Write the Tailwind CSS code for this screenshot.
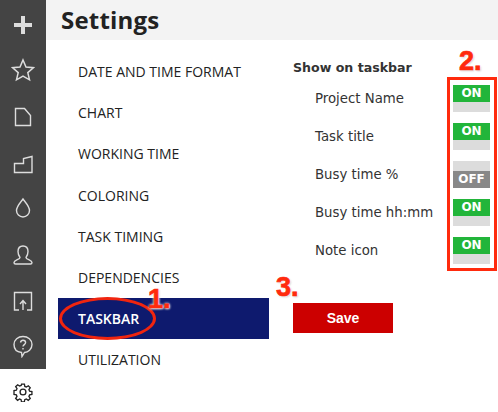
<!DOCTYPE html>
<html>
<head>
<meta charset="utf-8">
<script src="https://cdn.jsdelivr.net/npm/@tailwindcss/browser@4"></script>
</head>
<body class="bg-white">
<div class="relative flex w-[498px] h-[412px] overflow-hidden font-['Open_Sans',sans-serif] text-[#222]">
  <aside class="w-[46px] shrink-0 flex flex-col items-center">
    <div class="w-full h-[369px] bg-[#444] flex flex-col items-center text-[#ddd] pt-[13px]">
      <svg width="24" height="24" viewBox="0 0 24 24" class="shrink-0"><path d="M10 3h4v7h7v4h-7v7h-4v-7H3v-4h7z" fill="#ddd"/></svg>
      <svg width="24" height="24" viewBox="0 0 24 24" class="shrink-0 mt-[21px]" fill="none" stroke="#ddd" stroke-width="1.500"><path d="M12 2l3 7 7.400.7-5.600 4.900 1.700 7.200L12 18l-6.500 3.800 1.700-7.200L1.600 9.700 9 9z"/></svg>
      <svg width="24" height="24" viewBox="0 0 24 24" class="shrink-0 mt-[23px]" fill="none" stroke="#ddd" stroke-width="1.400"><path d="M4.500 3.500h9l6 7v10h-15z"/></svg>
      <svg width="24" height="24" viewBox="0 0 24 24" class="shrink-0 mt-[23px]" fill="none" stroke="#ddd" stroke-width="1.400"><path d="M3.500 20.500v-9h9v-5l8.500-2v16z"/></svg>
      <svg width="24" height="24" viewBox="0 0 24 24" class="shrink-0 mt-[20px]" fill="none" stroke="#ddd" stroke-width="1.400"><path d="M12 3c3 4 6.500 7.500 6.500 11.500a6.500 6.500 0 0 1-13 0C5.500 10.500 9 7 12 3z"/></svg>
      <svg width="24" height="24" viewBox="0 0 24 24" class="shrink-0 mt-[23px]" fill="none" stroke="#ddd" stroke-width="1.400"><path d="M9 14.500C7.500 12.500 7 10.500 7 8.500 7 5 9 3 12 3s5 2 5 5.500c0 2-.5 4-2 6 0 2 6 2.500 6 5 0 1-.500 1.500-1.500 1.500H4.500C3.500 21 3 20.500 3 19.500c0-2.500 6-3 6-5z"/></svg>
      <svg width="24" height="24" viewBox="0 0 24 24" class="shrink-0 mt-[22px]" fill="none" stroke="#ddd" stroke-width="1.400"><path d="M8 21H3.500V3.500h17V21H16M12 21v-9M9 15l3-3.500 3 3.500"/></svg>
      <svg width="24" height="24" viewBox="0 0 24 24" class="shrink-0 mt-[21px]" fill="none" stroke="#ddd" stroke-width="1.400"><path d="M12 2.500c5 0 9 3.300 9 8s-4 8-7.500 8L11 22.500l-.5-4C6 18 3 15 3 10.500s4-8 9-8z"/><path d="M9.500 8.500c.3-1.500 1.300-2.200 2.500-2.200 1.500 0 2.600 1 2.600 2.300 0 2-2.600 2-2.600 4M12 14v1.500"/></svg>
    </div>
    <svg width="20" height="20" viewBox="0 0 24 24" class="mt-[13px]" fill="none" stroke="#222" stroke-width="1.600"><circle cx="12" cy="12" r="3.500"/><path d="M10.300 2.500h3.400l.5 2.800 1.800.8 2.400-1.600 2.300 2.400-1.600 2.300.8 1.900 2.800.5v3.400l-2.800.5-.8 1.800 1.600 2.400-2.400 2.300-2.300-1.600-1.900.8-.5 2.800h-3.400l-.5-2.800-1.800-.8-2.400 1.600-2.300-2.400 1.600-2.300-.8-1.900-2.800-.5V10.300l2.800-.5.800-1.800-1.600-2.400 2.400-2.300 2.300 1.600 1.900-.8z"/></svg>
  </aside>
  <main class="flex-1 min-w-0">
    <header class="h-[40px] bg-[#f3f3f3] pl-[15px] flex items-center">
      <h1 class="text-[24px] leading-[36px] font-bold text-[#222] tracking-[0.2px]">Settings</h1>
    </header>
    <div class="flex pl-[12px]">
      <nav class="w-[211px] shrink-0 pt-[11px] flex flex-col text-[14px]">
        <div class="h-[41.200px] pl-[20px] flex items-center">DATE AND TIME FORMAT</div>
        <div class="h-[41.200px] pl-[20px] flex items-center">CHART</div>
        <div class="h-[41.200px] pl-[20px] flex items-center">WORKING TIME</div>
        <div class="h-[41.200px] pl-[20px] flex items-center">COLORING</div>
        <div class="h-[41.200px] pl-[20px] flex items-center">TASK TIMING</div>
        <div class="h-[41.200px] pl-[20px] flex items-center">DEPENDENCIES</div>
        <div class="h-[41.200px] pl-[20px] flex items-center bg-[#0e1a6e] text-white font-semibold">TASKBAR</div>
        <div class="h-[41.200px] pl-[20px] flex items-center">UTILIZATION</div>
      </nav>
      <section class="pl-[24px] flex-1 pt-[18px] font-['DejaVu_Sans',sans-serif] text-[13.300px] text-[#333]">
        <div class="font-bold h-[19px] leading-[19px] text-[12.600px]">Show on taskbar</div>
        <div class="flex flex-col gap-[11px] mt-[8px]">
          <div class="flex h-[27px]"><span class="ml-[22px] w-[138px] leading-[28px]">Project Name</span>
            <div class="w-[37px] flex flex-col bg-[#dcdcdc]"><div class="h-[17px] bg-[#22b53a] text-white font-bold text-[12px] leading-[17px] text-center">ON</div></div></div>
          <div class="flex h-[27px]"><span class="ml-[22px] w-[138px] leading-[28px]">Task title</span>
            <div class="w-[37px] flex flex-col bg-[#dcdcdc]"><div class="h-[17px] bg-[#22b53a] text-white font-bold text-[12px] leading-[17px] text-center">ON</div></div></div>
          <div class="flex h-[27px]"><span class="ml-[22px] w-[138px] leading-[28px]">Busy time %</span>
            <div class="w-[37px] flex flex-col justify-end bg-[#dcdcdc]"><div class="h-[17px] bg-[#888] text-white font-bold text-[12px] leading-[17px] text-center">OFF</div></div></div>
          <div class="flex h-[27px]"><span class="ml-[22px] w-[138px] leading-[28px] whitespace-nowrap">Busy time hh:mm</span>
            <div class="w-[37px] flex flex-col bg-[#dcdcdc]"><div class="h-[17px] bg-[#22b53a] text-white font-bold text-[12px] leading-[17px] text-center">ON</div></div></div>
          <div class="flex h-[27px]"><span class="ml-[22px] w-[138px] leading-[28px]">Note icon</span>
            <div class="w-[37px] flex flex-col bg-[#dcdcdc]"><div class="h-[17px] bg-[#22b53a] text-white font-bold text-[12px] leading-[17px] text-center">ON</div></div></div>
        </div>
        <button class="block mt-[39px] w-[100px] h-[30px] bg-[#cc0000] text-white font-['Liberation_Sans',sans-serif] font-bold text-[14px]">Save</button>
      </section>
    </div>
  </main>

  <div class="absolute left-[447px] top-[77px] w-[50px] h-[194px] border-[3px] border-[#ff2a0d]"></div>
  <div class="absolute left-[59px] top-[297px] w-[97px] h-[43px] rounded-[50%] border-[3px] border-[#f0250f]"></div>
  <span class="absolute left-[148px] top-[283px] text-[27px] leading-[32px] font-bold text-[#ff2a0d] font-['Liberation_Sans',sans-serif] [-webkit-text-stroke:0.7px_#ff2a0d] [text-shadow:0_0_3px_#fff,0_0_3px_#fff,1px_1px_2px_#bbb]">1.</span>
  <span class="absolute left-[459px] top-[45px] text-[27px] leading-[32px] font-bold text-[#ff2a0d] font-['Liberation_Sans',sans-serif] [-webkit-text-stroke:0.7px_#ff2a0d] [text-shadow:0_0_3px_#fff,0_0_3px_#fff,1px_1px_2px_#bbb]">2.</span>
  <span class="absolute left-[276px] top-[271px] text-[27px] leading-[32px] font-bold text-[#ff2a0d] font-['Liberation_Sans',sans-serif] [-webkit-text-stroke:0.7px_#ff2a0d] [text-shadow:0_0_3px_#fff,0_0_3px_#fff,1px_1px_2px_#bbb]">3.</span>
</div>
</body>
</html>
